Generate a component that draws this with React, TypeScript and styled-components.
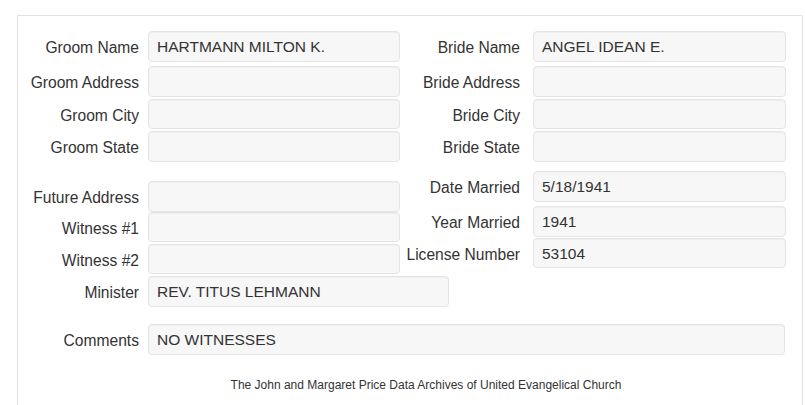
import styled, { createGlobalStyle } from "styled-components";

const GlobalStyle = createGlobalStyle`
  html, body {
    margin: 0;
    padding: 0;
    background: #fff;
    overflow: hidden;
  }
  body {
    font-family: "Liberation Sans", Arial, sans-serif;
    font-size: 15.5px;
    color: #333;
  }
`;

const Panel = styled.div`
  margin: 15px 0 0 17px;
  width: 786px;
  height: 390px;
  box-sizing: border-box;
  border: 1px solid #e2e2e2;
  border-bottom: none;
  display: flex;
  flex-direction: column;
`;

const Group = styled.div<{ $top: number }>`
  margin-top: ${(p) => p.$top}px;
  display: flex;
  align-items: flex-start;
`;

const Column = styled.div<{ $top?: number; $width: number }>`
  width: ${(p) => p.$width}px;
  margin-top: ${(p) => p.$top ?? 0}px;
  display: flex;
  flex-direction: column;
`;

const Row = styled.div<{ $label: number; $gap: number; $input: number; $top?: number }>`
  display: grid;
  grid-template-columns: ${(p) => p.$label}px ${(p) => p.$input}px;
  column-gap: ${(p) => p.$gap}px;
  align-items: center;
  margin-top: ${(p) => p.$top ?? 0}px;
`;

const Label = styled.label`
  text-align: right;
  white-space: nowrap;
  padding-top: 3px;
  font-size: 15.6px;
`;

const Field = styled.input<{ $h?: number }>`
  box-sizing: border-box;
  width: 100%;
  height: ${(p) => p.$h ?? 31}px;
  margin: 0;
  padding: 1px 8px 0;
  border: 1px solid #e4e4e4;
  border-radius: 4px;
  background: #f7f7f7;
  box-shadow: inset 0 1px 1px rgba(0, 0, 0, 0.03);
  font: inherit;
  color: #333;
  outline: none;
`;

const Footer = styled.div`
  margin-top: 23px;
  padding-left: 32px;
  text-align: center;
  font-size: 12px;
  color: #333;
`;

type Item = { label: string; value?: string; top?: number; h?: number };

const groom: Item[] = [
  { label: "Groom Name", value: "HARTMANN MILTON K." },
  { label: "Groom Address", top: 4 },
  { label: "Groom City", top: 2, h: 30 },
  { label: "Groom State", top: 2 },
];

const bride: Item[] = [
  { label: "Bride Name", value: "ANGEL IDEAN E." },
  { label: "Bride Address", top: 4 },
  { label: "Bride City", top: 2, h: 30 },
  { label: "Bride State", top: 2 },
];

const extraLeft: Item[] = [
  { label: "Future Address" },
  { label: "Witness #1", h: 30 },
  { label: "Witness #2", top: 2, h: 30 },
];

const extraRight: Item[] = [
  { label: "Date Married", value: "5/18/1941" },
  { label: "Year Married", value: "1941", top: 4 },
  { label: "License Number", value: "53104", top: 1, h: 30 },
];

function Fields({ items, side }: { items: Item[]; side: "left" | "right" }) {
  const dims = side === "left" ? { l: 121, g: 9, i: 252 } : { l: 120, g: 13, i: 253 };
  return (
    <>
      {items.map((it) => (
        <Row key={it.label} $label={dims.l} $gap={dims.g} $input={dims.i} $top={it.top}>
          <Label>{it.label}</Label>
          <Field readOnly defaultValue={it.value ?? ""} $h={it.h} />
        </Row>
      ))}
    </>
  );
}

export default function App() {
  return (
    <>
      <GlobalStyle />
      <Panel>
        <Group $top={15}>
          <Column $width={382}>
            <Fields items={groom} side="left" />
          </Column>
          <Column $width={386}>
            <Fields items={bride} side="right" />
          </Column>
        </Group>

        <Group $top={9}>
          <Column $width={382} $top={10}>
            <Fields items={extraLeft} side="left" />
          </Column>
          <Column $width={386}>
            <Fields items={extraRight} side="right" />
          </Column>
        </Group>

        <Row $label={121} $gap={9} $input={301} $top={2}>
          <Label>Minister</Label>
          <Field readOnly defaultValue="REV. TITUS LEHMANN" />
        </Row>

        <Row $label={121} $gap={9} $input={637} $top={17}>
          <Label>Comments</Label>
          <Field readOnly defaultValue="NO WITNESSES" />
        </Row>

        <Footer>The John and Margaret Price Data Archives of United Evangelical Church</Footer>
      </Panel>
    </>
  );
}
